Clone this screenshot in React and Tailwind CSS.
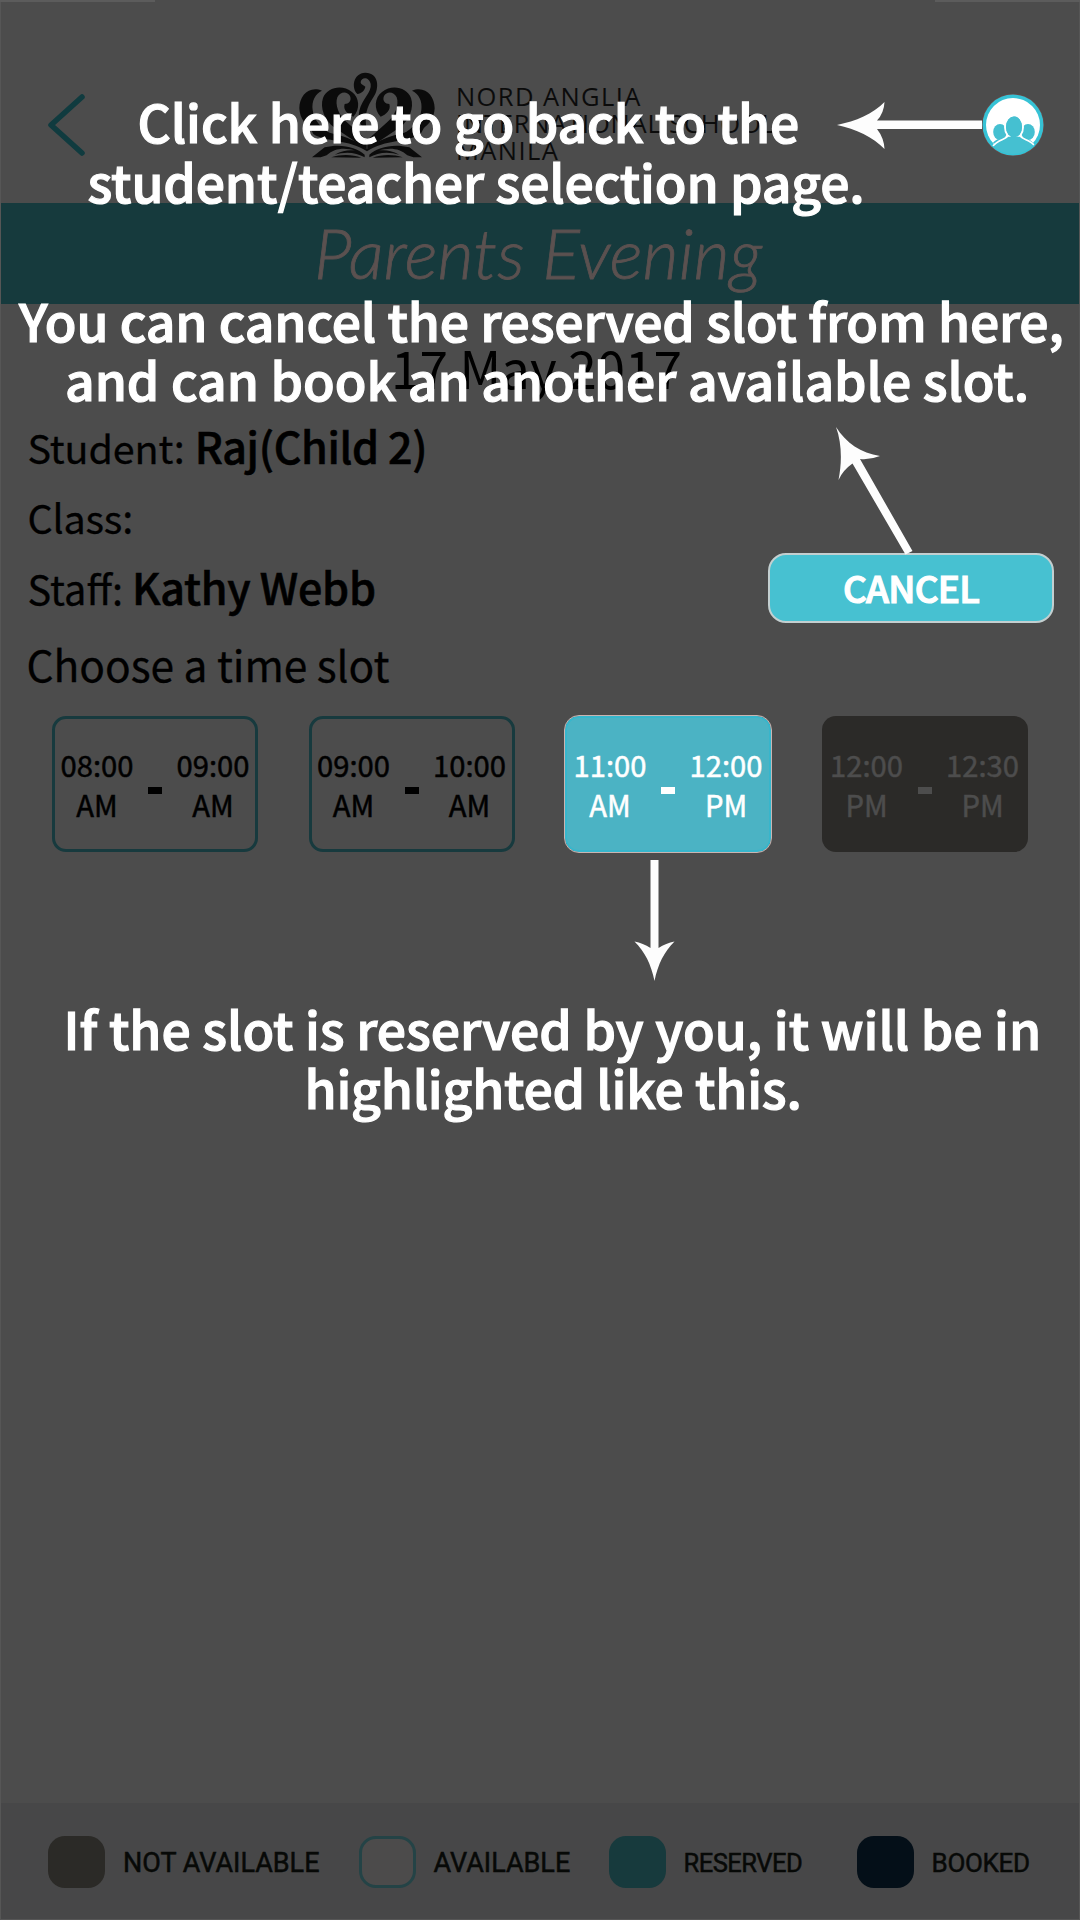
import React from 'react';

const BackChevron = () => (
  <svg className="h-[64px] w-[42px]" viewBox="0 0 42 64" fill="none" stroke="#103b3f" strokeWidth="5.5" strokeLinecap="round" strokeLinejoin="round">
    <path d="M37 4 L6 32 L37 60" />
  </svg>
);

// One side of the crown; the other side is its mirror image.
const CrownHalf = () => (
  <g>
    <path d="M122 92 C84 76 54 106 54 145 C55 176 75 203 106 214 L170 238 L150 222 C118 204 98 180 94 150 C90 124 102 100 122 92 Z" />
    <path d="M216 170 C238 148 234 112 212 96 C182 72 138 82 125 114 C115 144 130 180 158 202 L256 268 L256 240 L200 190 C172 168 160 134 168 112 C176 94 198 92 206 108 C212 122 202 132 190 132 C184 150 200 164 216 170 Z" />
    <path d="M82 196 C120 222 200 218 257 268 L257 274 C205 238 130 246 96 222 Z" />
    <path d="M92 292 L130 262 C180 250 225 262 250 284 L250 292 C225 276 190 274 160 284 C186 270 206 270 222 272 C190 262 160 264 136 286 L118 292 Z" />
    <path d="M150 292 C180 282 215 284 240 293 Z" />
  </g>
);

const Crest = () => (
  <svg className="h-[88px] w-[140px]" viewBox="47 33 420 264" fill="#0b0b0b">
    <CrownHalf />
    <g transform="translate(514 0) scale(-1 1)">
      <CrownHalf />
    </g>
    <path d="M228 102 C210 84 214 40 252 38 C292 38 296 84 276 112 C256 142 248 166 257 214 C238 200 228 178 234 152 C242 118 272 96 268 72 C264 50 240 50 238 66 C238 74 248 76 252 80 C250 92 240 100 228 102 Z" />
  </svg>
);

const PeopleBadge = () => (
  <svg className="h-[64px] w-[64px]" viewBox="0 0 64 64">
    <defs>
      <clipPath id="badge"><circle cx="32" cy="32" r="29" /></clipPath>
    </defs>
    <circle cx="32" cy="32" r="31.2" fill="#6b4a48" />
    <circle cx="32" cy="32" r="30.5" fill="#36c2d5" />
    <circle cx="32" cy="32" r="27" fill="#fff" />
    <g clipPath="url(#badge)" fill="#45c0d1">
      <ellipse cx="19" cy="39" rx="6.8" ry="8" />
      <ellipse cx="47" cy="39" rx="6.8" ry="8" />
      <path d="M12 50 C14 46 20 45 24 46 L20 54 Z M52 50 C50 46 44 45 40 46 L44 54 Z" />
      <ellipse cx="33" cy="34" rx="9" ry="11.5" stroke="#fff" strokeWidth="2" />
      <path d="M11 54 C17 46 24 47 27 43 L39 43 C42 47 49 46 55 54 L48 64 L18 64 Z" stroke="#fff" strokeWidth="1.6" />
      <ellipse cx="33" cy="34" rx="8" ry="10.5" />
    </g>
  </svg>
);

const slots = [
  { from: ['08:00', 'AM'], to: ['09:00', 'AM'], box: 'border-[3px] border-[#173a3e] text-black', dash: 'bg-black' },
  { from: ['09:00', 'AM'], to: ['10:00', 'AM'], box: 'border-[3px] border-[#173a3e] text-black', dash: 'bg-black' },
  { from: ['11:00', 'AM'], to: ['12:00', 'PM'], box: 'border-2 border-[#37b6cc] bg-[#4bb3c4] text-white outline outline-[#c9b5b2]', dash: 'bg-white' },
  { from: ['12:00', 'PM'], to: ['12:30', 'PM'], box: 'bg-[#2b2a28] text-[#4d4d4d]', dash: 'bg-[#4d4d4d]' },
];

const Time = ({ value }) => (
  <div className="w-[74px] text-center text-[29.2px] leading-[40px] [-webkit-text-stroke:0.5px_currentColor]">
    <div>{value[0]}</div>
    <div>{value[1]}</div>
  </div>
);

const Slot = ({ slot }) => (
  <div className={`flex h-[136px] w-[206px] shrink-0 items-center justify-center gap-[14px] rounded-[14px] ${slot.box}`}>
    <Time value={slot.from} />
    <div className={`mt-[12px] h-[7px] w-[14px] shrink-0 ${slot.dash}`} />
    <Time value={slot.to} />
  </div>
);

const legend = [
  { label: 'NOT AVAILABLE', item: 'w-[310.5px]', swatch: 'bg-[#2b2a27]', text: 'text-[27px]' },
  { label: 'AVAILABLE', item: 'w-[250px]', swatch: 'border-[3px] border-[#244346] bg-[#4c4b4b]', text: 'text-[27px]' },
  { label: 'RESERVED', item: 'w-[248px]', swatch: 'bg-[#173a3d]', text: 'text-[25.5px] tracking-[-0.5px]' },
  { label: 'BOOKED', item: 'w-[200px]', swatch: 'bg-[#040f18]', text: 'text-[26px] tracking-[-0.3px]' },
];

const Arrows = () => (
  <svg className="absolute inset-0 h-full w-full" viewBox="0 0 1080 1920" fill="#fdfdfd">
    <path d="M837 125 C856 121 873 114 884.500 102 Q884 113 877 120.500 L982 120.500 L982 129 L877 129 Q884 138 884.500 149 C873 137 856 129 837 125 Z" />
    <path d="M836 427 C846 443 861 453 880 456 Q870 460 860 459 L912.500 551 L905.500 554.500 L852.500 463.500 Q843 470 838.500 480 C842 463 842 443 836 427 Z" />
    <path d="M654.500 981 C651 964 645 952 634.500 941.500 Q643 943 650.500 948 L650.500 860 L658.500 860 L658.500 948 Q666 943 674.500 941.500 C664 952 658 964 654.500 981 Z" />
  </svg>
);

export default function App() {
  return (
    <div className="relative flex h-[1920px] w-[1080px] flex-col overflow-hidden bg-[#4c4c4c] font-['Noto_Sans_CJK_SC','Noto_Sans',sans-serif] text-black">
      <header className="flex h-[203px] shrink-0 items-start">
        <div className="pt-[93px] pl-[44.5px]"><BackChevron /></div>
        <div className="pt-[71px] pl-[210px]"><Crest /></div>
        <div className="w-[330px] pt-[83px] pl-[19.500px] font-['Open_Sans','Noto_Sans',sans-serif] text-[25.5px] leading-[27px] whitespace-nowrap text-[#0b0b0b]">
          <div className="tracking-[1.4px]">NORD ANGLIA</div>
          <div className="tracking-[0.8px]">INTERNATIONAL SCHOOL</div>
          <div className="tracking-[1.4px]">MANILA</div>
        </div>
        <div className="ml-auto pt-[93px] pr-[35.5px]"><PeopleBadge /></div>
      </header>

      <div className="flex h-[101px] shrink-0 justify-center bg-[#163a3d] pr-[4px] font-['Lato',sans-serif] text-[70px] leading-[98px] font-light text-[#5b5150] italic [-webkit-text-stroke:0.8px_#5b5150]">
        Parents Evening
      </div>

      <main className="flex flex-1 flex-col">
        <div className="mt-[33px] pr-[7px] text-center text-[51.3px] leading-[60px]">17 May 2017</div>

        <div className="mt-[18px] flex h-[60px] items-baseline gap-[10px] pl-[27.5px] leading-[60px] [-webkit-text-stroke:0.3px_black]">
          <span className="text-[39.5px] tracking-[-0.15px]">Student:</span>
          <span className="text-[43px] font-medium tracking-[-0.35px] [-webkit-text-stroke:0.6px_black]">Raj(Child 2)</span>
        </div>
        <div className="mt-[12px] pl-[27.5px] text-[39.5px] leading-[60px] tracking-[-0.2px] [-webkit-text-stroke:0.3px_black]">Class:</div>
        <div className="mt-[6px] flex h-[70px] items-start justify-between pr-[26px] pl-[27.5px]">
          <div className="flex items-baseline gap-[9px] pt-[3px] leading-[60px] [-webkit-text-stroke:0.3px_black]">
            <span className="text-[39.700px]">Staff:</span>
            <span className="text-[43px] font-medium tracking-[-0.25px] [-webkit-text-stroke:0.6px_black]">Kathy Webb</span>
          </div>
          <button className="flex h-[70px] w-[286px] items-center justify-center rounded-[18px] border-2 border-[#c3cfd0] bg-[#47c1d1] text-[37px] font-medium tracking-[-0.8px] text-white [-webkit-text-stroke:1.2px_white]">
            CANCEL
          </button>
        </div>
        <div className="mt-[11px] pl-[26.500px] text-[42.5px] leading-[60px] tracking-[-0.05px] [-webkit-text-stroke:0.3px_black]">Choose a time slot</div>

        <div className="mt-[22px] flex gap-[50.500px] pl-[52px]">
          {slots.map((slot, i) => <Slot key={i} slot={slot} />)}
        </div>
      </main>

      <footer className="flex h-[117px] shrink-0 items-center border-b border-[#565656] bg-[#474748] pt-[2px] pl-[48px] font-['Roboto',sans-serif]">
        {legend.map((l) => (
          <div key={l.label} className={`flex shrink-0 items-center gap-[18px] ${l.item}`}>
            <div className={`h-[52px] w-[57px] shrink-0 rounded-[17px] ${l.swatch}`} />
            <span className={`pt-[2px] whitespace-nowrap text-[#070907] [-webkit-text-stroke:0.5px_#070907] ${l.text}`}>{l.label}</span>
          </div>
        ))}
      </footer>

      {/* Help overlay */}
      <div className="pointer-events-none absolute inset-0 flex flex-col border-x border-[#565656] text-[51.7px] leading-[59.5px] font-medium whitespace-nowrap text-white [-webkit-text-stroke:1.2px_white]">
        <div className="mt-[91px]">
          <div className="pl-[136.5px] tracking-[-0.1px]">Click here to go back to the</div>
          <div className="pl-[86.5px] tracking-[-0.13px]">student/teacher selection page.</div>
        </div>
        <div className="mt-[79.5px]">
          <div className="pl-[18px] tracking-[-0.17px]">You can cancel the reserved slot from here,</div>
          <div className="pl-[64px] tracking-[-0.05px]">and can book an another available slot.</div>
        </div>
        <div className="mt-[589px]">
          <div className="pl-[62.5px] tracking-[-0.03px]">If the slot is reserved by you, it will be in</div>
          <div className="pl-[303.5px] tracking-[-0.2px]">highlighted like this.</div>
        </div>
      </div>
      <div className="absolute top-0 left-0 h-[2px] w-[155px] bg-[#5c5c5c]" />
      <div className="absolute top-0 right-0 h-[2px] w-[145px] bg-[#5c5c5c]" />
      <Arrows />
    </div>
  );
}
